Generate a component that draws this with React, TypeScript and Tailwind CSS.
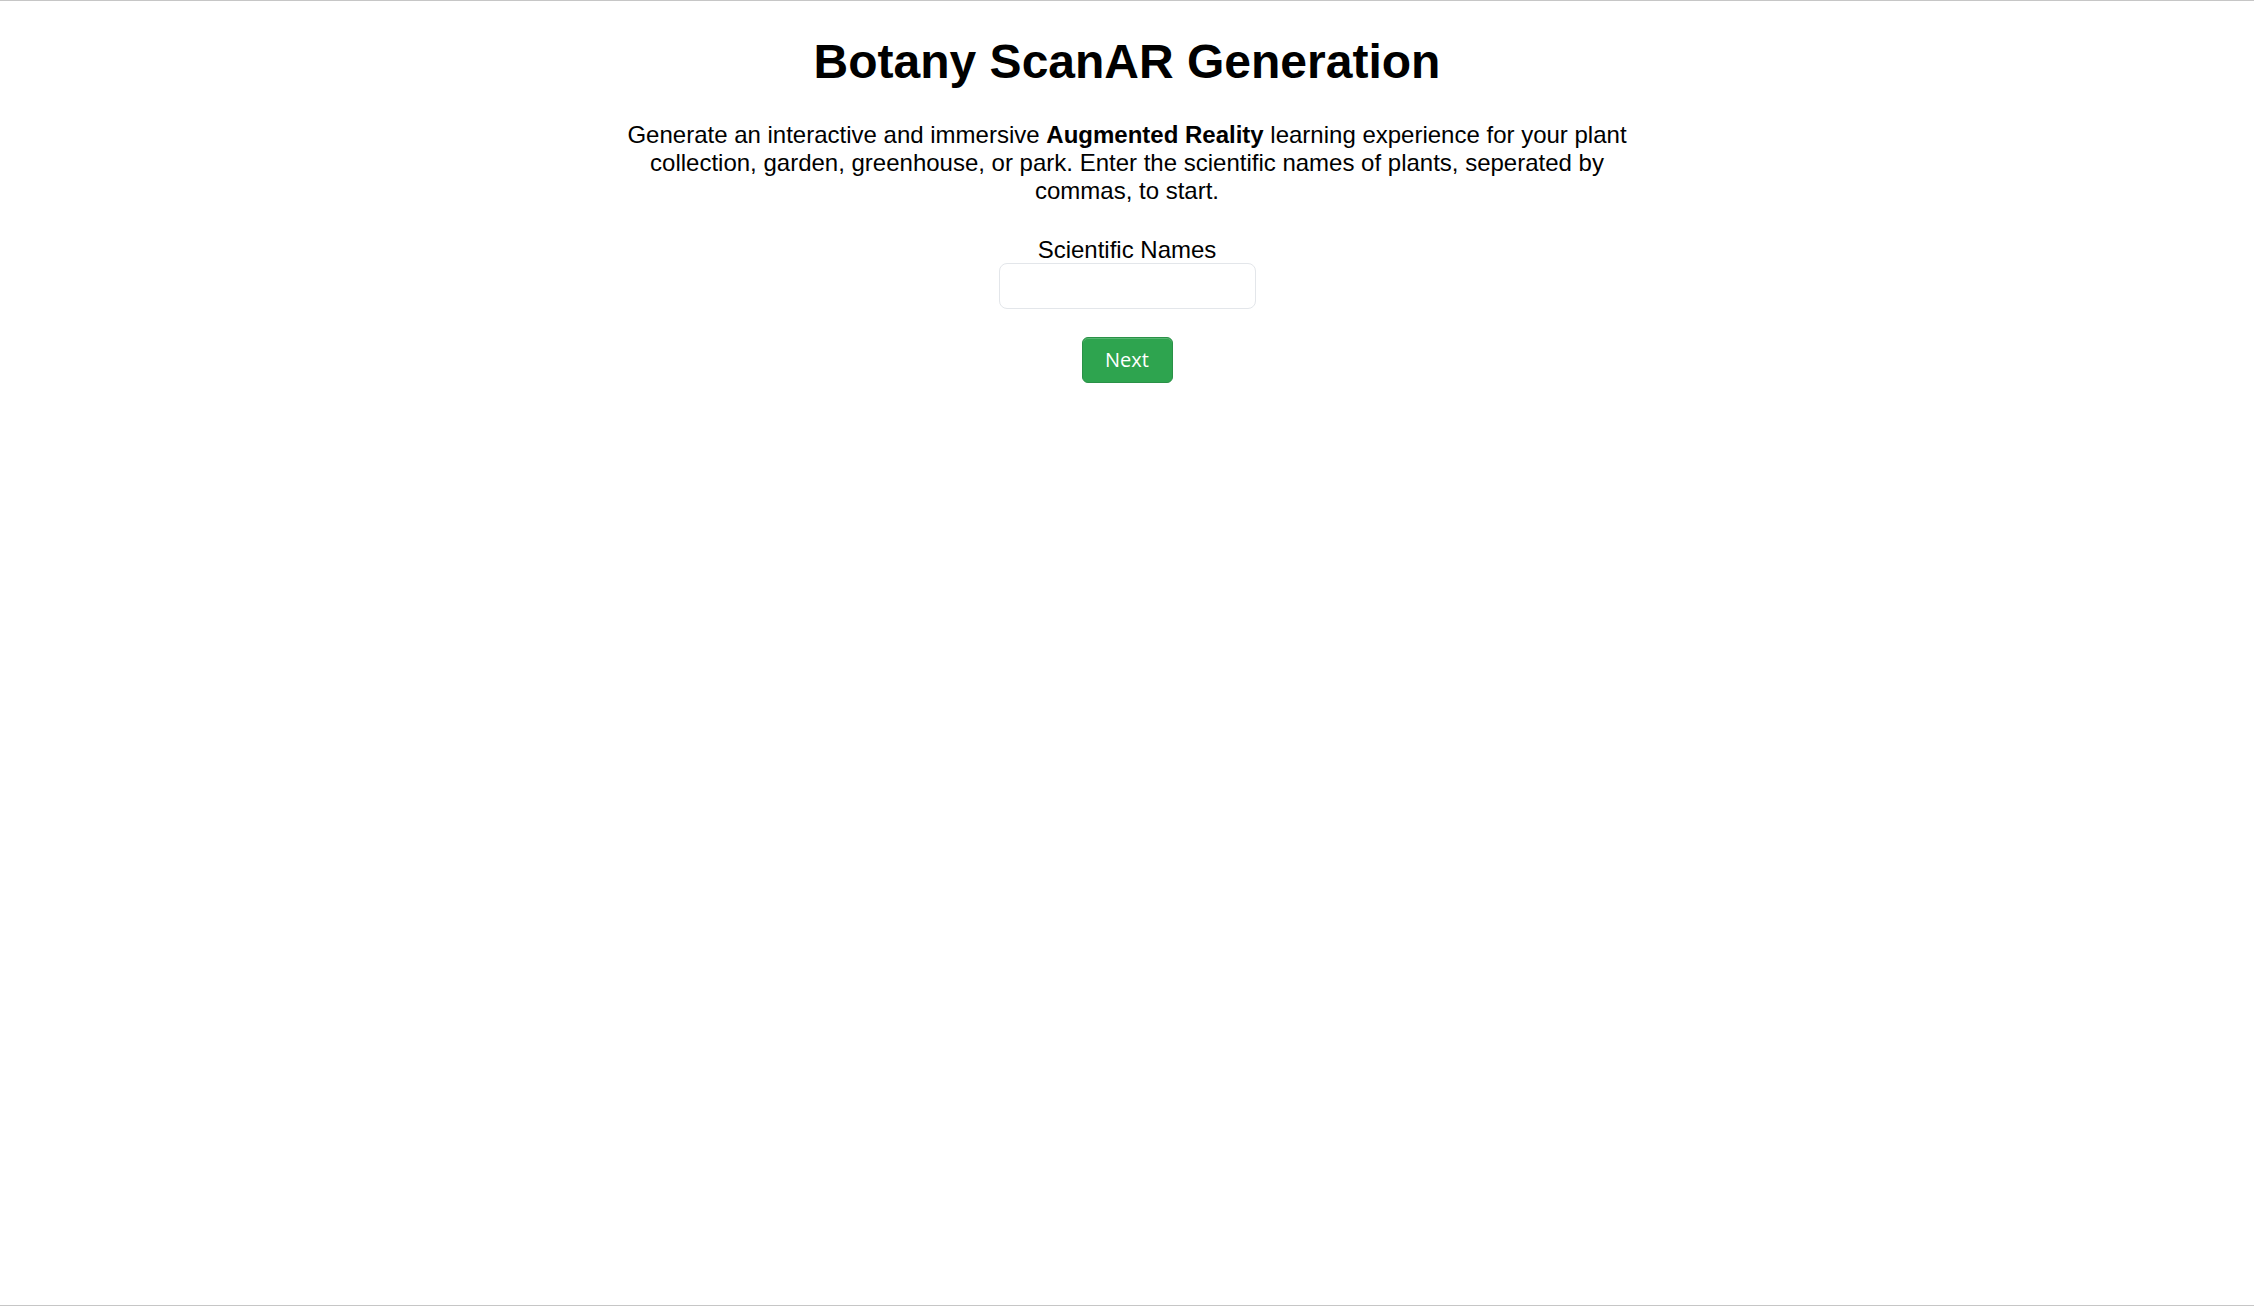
import { useState } from 'react';

export default function App() {
    const [names, setNames] = useState('');

    return (
        <div className="h-[1306px] border-y border-[#c6c6c6] bg-white text-black font-['Liberation_Sans',Arial,sans-serif]">
            <div className="flex flex-col items-center pt-[33px]">
                <h1 className="text-[48px] leading-[56px] font-bold">Botany ScanAR Generation</h1>

                <p className="mt-[31px] max-w-[1020px] text-center text-[24px] leading-[28px]">
                    Generate an interactive and immersive <strong className="font-bold">Augmented Reality</strong> learning
                    experience for your plant collection, garden, greenhouse, or park. Enter the scientific names of plants,
                    seperated by commas, to start.
                </p>

                <label htmlFor="names" className="mt-[31px] text-[24px] leading-[27px]">
                    Scientific Names
                </label>
                <input
                    id="names"
                    type="text"
                    value={names}
                    onChange={(e) => setNames(e.target.value)}
                    className="w-[257px] h-[46px] px-3 rounded-lg border border-[#e3e6ea] bg-white text-[20px] outline-none"
                />

                <button
                    type="button"
                    className="mt-[28px] w-[91px] h-[46px] rounded-md border border-[#2a9147] bg-[#2ea44f] text-white text-[20px] font-['Open_Sans',sans-serif] shadow-[inset_0_1px_0_rgba(255,255,255,0.2)]"
                >
                    Next
                </button>
            </div>
        </div>
    );
}
